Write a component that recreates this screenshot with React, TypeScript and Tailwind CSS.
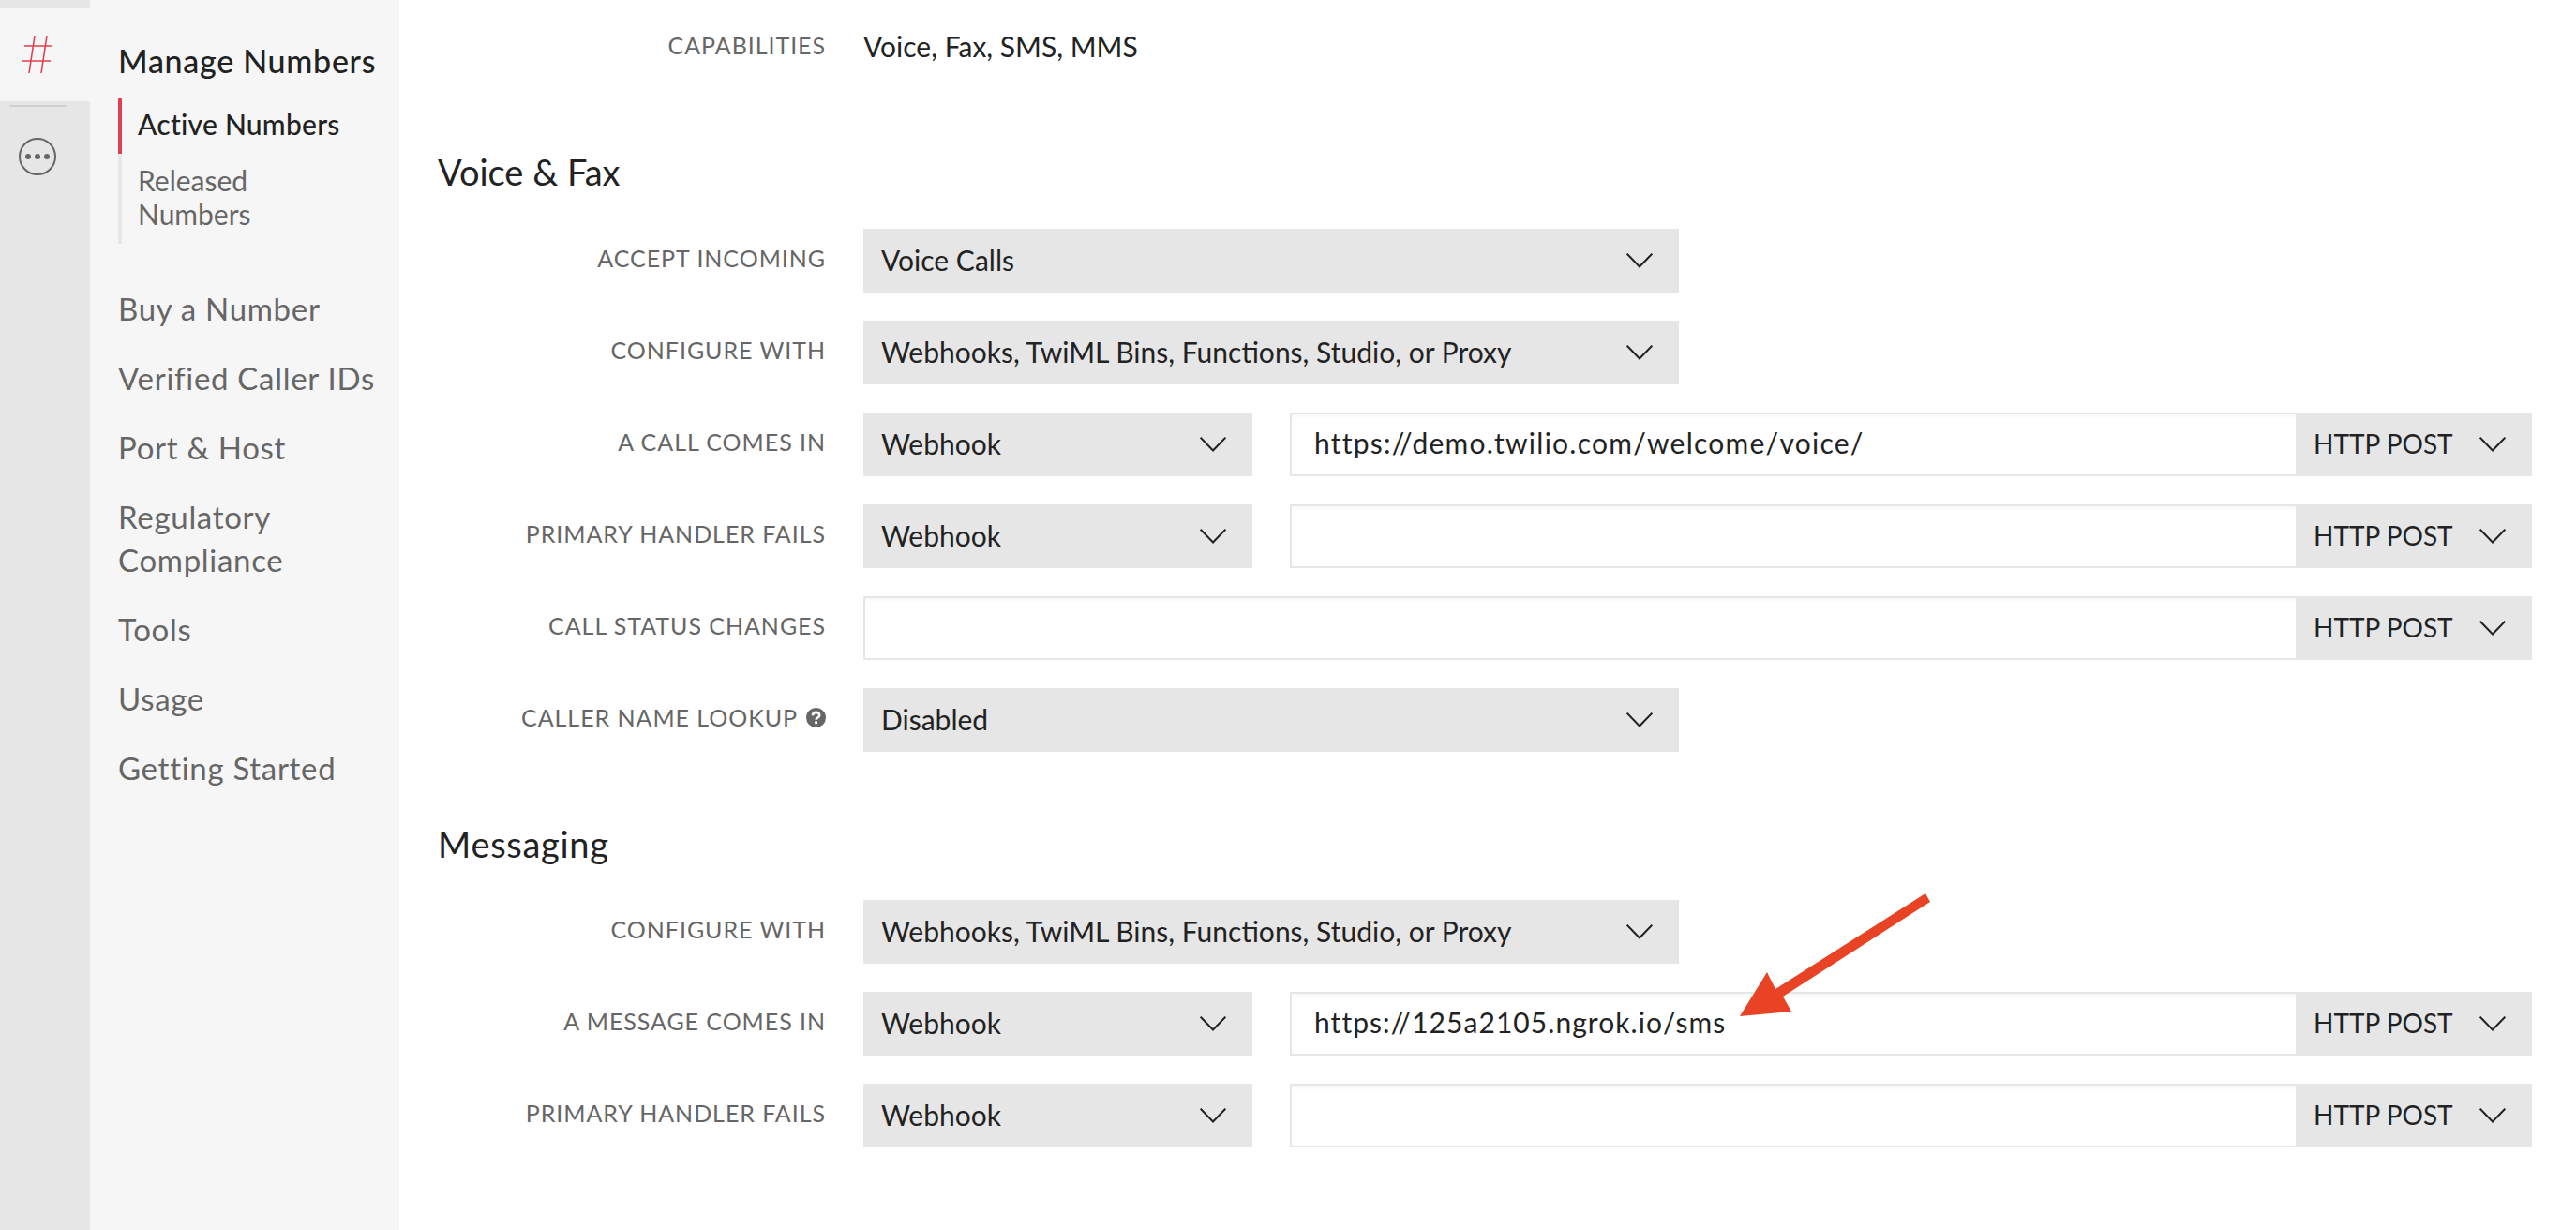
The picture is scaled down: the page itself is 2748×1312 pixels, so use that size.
const font = "font-['Lato','Liberation_Sans',sans-serif]";

function Chevron() {
  return (
    <svg width="28" height="16" viewBox="0 0 28 16" fill="none" className="shrink-0">
      <path d="M0.7 0.7 L14 14.5 L27.3 0.7" stroke="#222222" strokeWidth="2" />
    </svg>
  );
}

function Label({ children, help }: { children: string; help?: boolean }) {
  return (
    <div className="w-[414px] shrink-0 mr-[40px] h-[68px] pb-[6px] flex justify-end items-center text-right">
      <div className="flex items-center h-[25px] text-[25px] tracking-[0.95px] leading-[25px] text-[#666666] whitespace-nowrap">
        <span>{children}</span>
        {help && (
          <svg width="21" height="21" viewBox="0 0 21 21" className="ml-[9px]">
            <circle cx="10.5" cy="10.5" r="10.5" fill="#666666" />
            <path d="M7 8.2 C7 3.8 14.2 3.8 14.2 8 C14.2 10.6 10.6 10.4 10.6 12.8" fill="none" stroke="#ffffff" strokeWidth="2.6" />
            <rect x="9.2" y="14.4" width="2.8" height="2.8" fill="#ffffff" />
          </svg>
        )}
      </div>
    </div>
  );
}

function Select({ value, className }: { value: string; className: string }) {
  return (
    <div className={`h-[68px] bg-[#e6e6e6] pl-[19px] pr-[28px] flex items-center justify-between shrink-0 ${className}`}>
      <span className="pb-[2px] text-[30px] text-[#222222] whitespace-nowrap">{value}</span>
      <Chevron />
    </div>
  );
}

function Method() {
  return (
    <div className="h-[68px] w-[252px] bg-[#e6e6e6] pl-[19px] pr-[28px] flex items-center justify-between shrink-0">
      <span className="pb-[2px] text-[28px] text-[#222222] whitespace-nowrap">HTTP POST</span>
      <Chevron />
    </div>
  );
}

function UrlInput({ value, spacing = "" }: { value?: string; spacing?: string }) {
  return (
    <div className="flex-1 h-[68px] flex min-w-0">
      <div className="flex-1 min-w-0 border-y-2 border-l-2 border-[#e6e6e6] shadow-[inset_0_4px_4px_-2px_rgba(0,0,0,0.04)] pl-[24px] pb-[3px] flex items-center text-[30px] text-[#222222] whitespace-nowrap">
        <span className={spacing}>{value}</span>
      </div>
      <Method />
    </div>
  );
}

function Row({ label, help, children }: { label: string; help?: boolean; children: React.ReactNode }) {
  return (
    <div className="flex h-[68px] mb-[30px]">
      <Label help={help}>{label}</Label>
      {children}
    </div>
  );
}

function Full({ label, value, help }: { label: string; value: string; help?: boolean }) {
  return (
    <Row label={label} help={help}>
      <Select value={value} className="w-[870px]" />
    </Row>
  );
}

function Hook({ label, url, spacing }: { label: string; url?: string; spacing?: string }) {
  return (
    <Row label={label}>
      <Select value="Webhook" className="w-[415px] mr-[40px]" />
      <UrlInput value={url} spacing={spacing} />
    </Row>
  );
}

const nav: string[][] = [
  ["Buy a Number"],
  ["Verified Caller IDs"],
  ["Port & Host"],
  ["Regulatory", "Compliance"],
  ["Tools"],
  ["Usage"],
  ["Getting Started"],
];

export default function App() {
  return (
    <div className={`relative flex h-[1312px] w-[2748px] overflow-hidden bg-white ${font}`}>
      <aside className="w-[96px] shrink-0 bg-[#e6e6e6] pt-[8px]">
        <div className="h-[100px] bg-[#f6f6f6] pl-[23px] pt-[29px]">
          <svg width="34" height="42" viewBox="0 0 34 42" fill="none" stroke="#e0404f" strokeWidth="1.6">
            <path d="M14 1 L8 41 M27 1 L21 41 M3 12 L33 12 M1 28 L31 28" />
          </svg>
        </div>
        <div className="mx-[10px] w-[62px] h-[2px] mt-[4px] bg-[#d0d0d0]" />
        <div className="ml-[20px] mt-[33px]">
          <svg width="40" height="40" viewBox="0 0 40 40" fill="none">
            <circle cx="20" cy="20" r="19" stroke="#666666" strokeWidth="2" />
            <circle cx="10" cy="20" r="3" fill="#666666" />
            <circle cx="20" cy="20" r="3" fill="#666666" />
            <circle cx="30" cy="20" r="3" fill="#666666" />
          </svg>
        </div>
      </aside>

      <nav className="w-[330px] shrink-0 bg-[#f6f6f6] pl-[30px] pt-[42px]">
        <div className="h-[46px] leading-[46px] text-[34px] font-medium text-[#222222] tracking-[0.7px] whitespace-nowrap">Manage Numbers</div>
        <div className="mt-[16px] w-[200px]">
          <div className="h-[60px] border-l-[4px] border-[#e0404f] pl-[17px] pb-[3px] flex items-center text-[30px] font-medium tracking-[0.25px] text-[#222222] whitespace-nowrap">Active Numbers</div>
          <div className="h-[96px] border-l-[4px] border-[#e6e6e6] pl-[17px] pt-[10px] text-[30px] leading-[36px] text-[#666666]">
            <div>Released</div>
            <div>Numbers</div>
          </div>
        </div>
        <div className="mt-[46px] text-[#666666] text-[33px] tracking-[0.7px] leading-[46px] whitespace-nowrap">
          {nav.map((lines) => (
            <div key={lines[0]} className="mb-[28px]">
              {lines.map((l) => (
                <div key={l}>{l}</div>
              ))}
            </div>
          ))}
        </div>
      </nav>

      <main className="flex-1 min-w-0 pl-[41px] pr-[47px] pt-[24px]">
        <div className="flex h-[50px] items-center">
          <div className="w-[414px] mr-[40px] text-right text-[25px] tracking-[0.95px] text-[#666666]">CAPABILITIES</div>
          <div className="text-[30px] text-[#222222]">Voice, Fax, SMS, MMS</div>
        </div>
        <h2 className="mt-[84px] mb-[36px] h-[50px] leading-[50px] text-[38px] font-normal text-[#222222]">Voice &amp; Fax</h2>
        <Full label="ACCEPT INCOMING" value="Voice Calls" />
        <Full label="CONFIGURE WITH" value="Webhooks, TwiML Bins, Functions, Studio, or Proxy" />
        <Hook label="A CALL COMES IN" url="https://demo.twilio.com/welcome/voice/" spacing="tracking-[1.25px]" />
        <Hook label="PRIMARY HANDLER FAILS" />
        <Row label="CALL STATUS CHANGES">
          <UrlInput />
        </Row>
        <Full label="CALLER NAME LOOKUP" value="Disabled" help />
        <h2 className="mt-[73px] mb-[35px] h-[50px] leading-[50px] text-[38px] tracking-[0.7px] font-normal text-[#222222]">Messaging</h2>
        <Full label="CONFIGURE WITH" value="Webhooks, TwiML Bins, Functions, Studio, or Proxy" />
        <Hook label="A MESSAGE COMES IN" url="https://125a2105.ngrok.io/sms" spacing="tracking-[1.05px]" />
        <Hook label="PRIMARY HANDLER FAILS" />
      </main>

      <svg className="absolute left-0 top-0 pointer-events-none" width="2748" height="1312" viewBox="0 0 2748 1312">
        <polygon points="1856,1084 1885,1037 1894,1055 2054,953 2059,962 1902,1063 1911,1079" fill="#e84325" />
      </svg>
    </div>
  );
}
